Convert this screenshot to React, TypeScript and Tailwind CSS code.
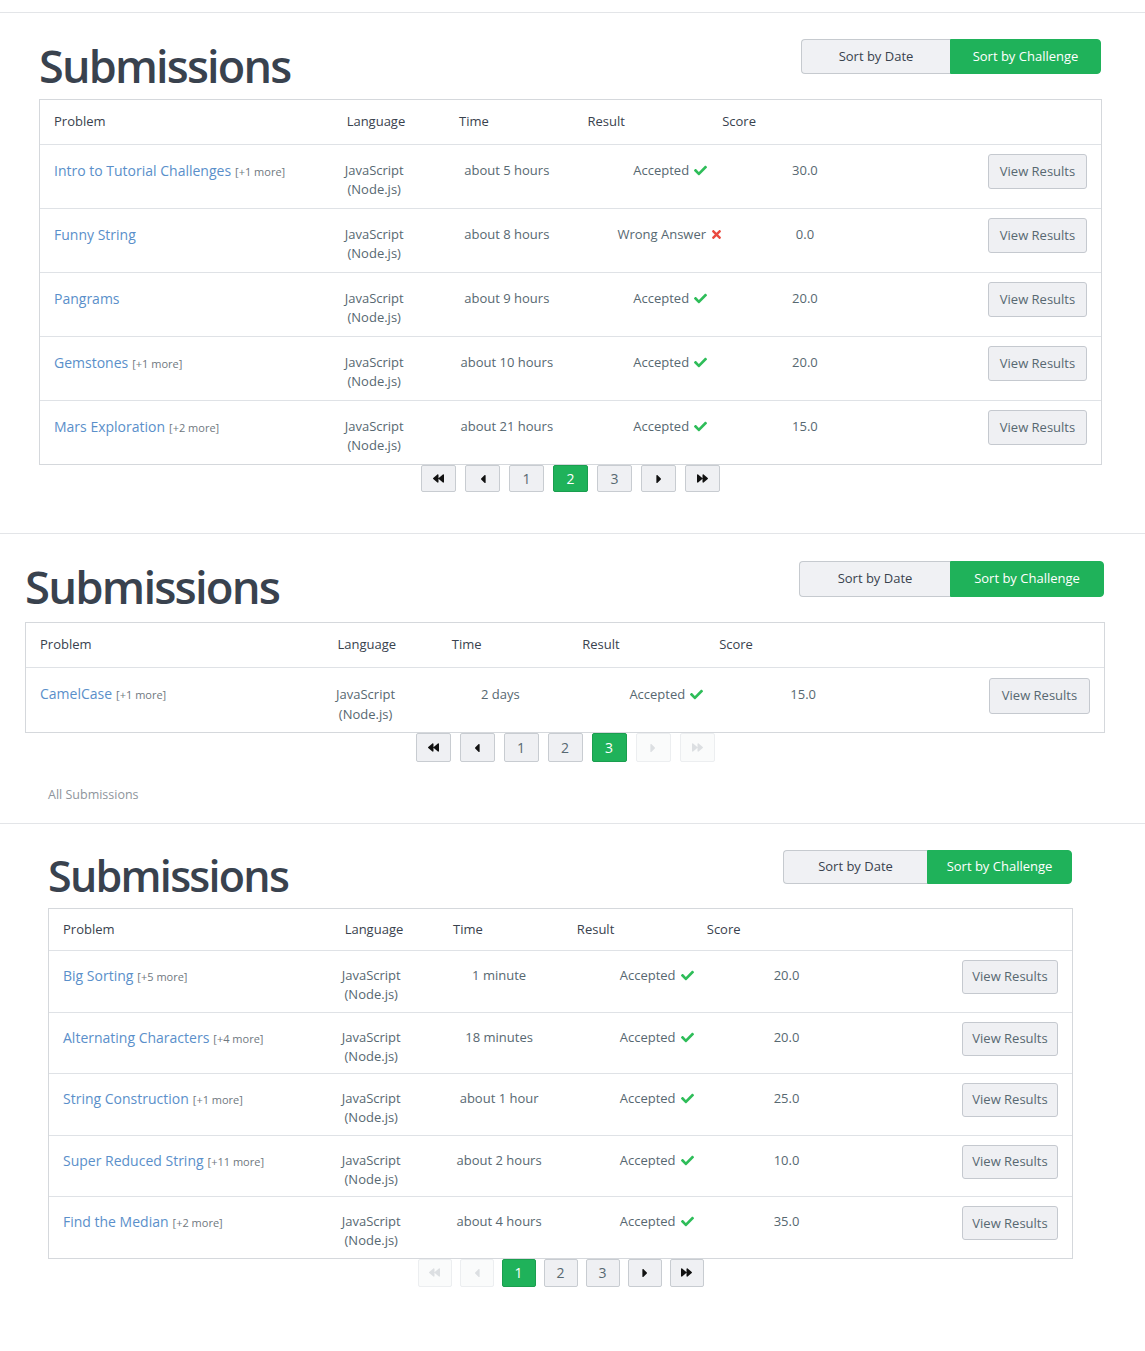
import { FaCheck, FaTimes, FaBackward, FaForward, FaCaretLeft, FaCaretRight } from 'react-icons/fa';

type Row = { problem: string; more?: string; time: string; ok: boolean; score: string };

type Layout = {
    section: string;
    pl: string;
    tableW: string;
    headArea: string;
    title: string;
    sortWrap: string;
    dateW: string;
    chalW: string;
    theadH: string;
    rowH: string;
    cellPt: string;
    btnPt: string;
    vrBtn: string;
    pager: string;
    pageBtn: string;
};

const P1: Layout = {
    section: 'mt-[12px] h-[521px]',
    pl: 'pl-[39px]',
    tableW: 'w-[1063px]',
    headArea: 'h-[86px]',
    title: 'text-[45px] mt-[30px]',
    sortWrap: 'mt-[26px] h-[35px]',
    dateW: 'w-[149px]',
    chalW: 'w-[151px]',
    theadH: 'h-[44px]',
    rowH: 'h-[64px]',
    cellPt: 'pt-[16px] leading-[19px]',
    btnPt: 'pt-[9px]',
    vrBtn: 'w-[99px] h-[35px]',
    pager: 'gap-[9px]',
    pageBtn: 'w-[35px] h-[27px]',
};

const P2: Layout = {
    section: 'h-[290px]',
    pl: 'pl-[25px]',
    tableW: 'w-[1080px]',
    headArea: 'h-[88px]',
    title: 'text-[45.5px] mt-[30px]',
    sortWrap: 'mt-[27px] h-[36px]',
    dateW: 'w-[151px]',
    chalW: 'w-[154px]',
    theadH: 'h-[44px]',
    rowH: 'h-[65px]',
    cellPt: 'pt-[16px] leading-[20px]',
    btnPt: 'pt-[10px]',
    vrBtn: 'w-[101px] h-[36px]',
    pager: 'gap-[9px]',
    pageBtn: 'w-[35px] h-[29px]',
};

const P3: Layout = {
    section: 'h-[528px]',
    pl: 'pl-[48px]',
    tableW: 'w-[1025px]',
    headArea: 'h-[84px]',
    title: 'text-[43px] mt-[30px]',
    sortWrap: 'mt-[26px] h-[34px]',
    dateW: 'w-[144px]',
    chalW: 'w-[145px]',
    theadH: 'h-[41px]',
    rowH: 'h-[61.6px]',
    cellPt: 'pt-[15px] leading-[19px]',
    btnPt: 'pt-[9px]',
    vrBtn: 'w-[96px] h-[34px]',
    pager: 'gap-[8px]',
    pageBtn: 'w-[34px] h-[28px]',
};

const ROWS1: Row[] = [
    { problem: 'Intro to Tutorial Challenges', more: '[+1 more]', time: 'about 5 hours', ok: true, score: '30.0' },
    { problem: 'Funny String', time: 'about 8 hours', ok: false, score: '0.0' },
    { problem: 'Pangrams', time: 'about 9 hours', ok: true, score: '20.0' },
    { problem: 'Gemstones', more: '[+1 more]', time: 'about 10 hours', ok: true, score: '20.0' },
    { problem: 'Mars Exploration', more: '[+2 more]', time: 'about 21 hours', ok: true, score: '15.0' },
];

const ROWS2: Row[] = [
    { problem: 'CamelCase', more: '[+1 more]', time: '2 days', ok: true, score: '15.0' },
];

const ROWS3: Row[] = [
    { problem: 'Big Sorting', more: '[+5 more]', time: '1 minute', ok: true, score: '20.0' },
    { problem: 'Alternating Characters', more: '[+4 more]', time: '18 minutes', ok: true, score: '20.0' },
    { problem: 'String Construction', more: '[+1 more]', time: 'about 1 hour', ok: true, score: '25.0' },
    { problem: 'Super Reduced String', more: '[+11 more]', time: 'about 2 hours', ok: true, score: '10.0' },
    { problem: 'Find the Median', more: '[+2 more]', time: 'about 4 hours', ok: true, score: '35.0' },
];

export default function App() {
    return (
        <div className="min-h-screen w-full bg-white font-['Open_Sans',sans-serif] text-[#576871] overflow-hidden">
            <Panel layout={P1} rows={ROWS1} page={2} />
            <Panel layout={P2} rows={ROWS2} page={3}>
                {/* breadcrumb of the next capture */}
                <div className="mt-[26px] pl-[23px] text-[12.5px] leading-[13px] text-[#8e959c]">All Submissions</div>
            </Panel>
            <Panel layout={P3} rows={ROWS3} page={1} />
        </div>
    );
}

function Panel({ layout: L, rows, page, children }: { layout: Layout; rows: Row[]; page: number; children?: React.ReactNode }) {
    return (
        <section className={`border-t border-[#e3e5e8] ${L.section}`}>
            <div className={L.pl}>
                <div className={L.tableW}>
                    <div className={`flex justify-between items-start ${L.headArea}`}>
                        <h1 className={`font-semibold text-[#39424e] leading-none tracking-[-0.04em] ${L.title}`}>Submissions</h1>
                        <div className={`flex mr-[1px] text-[13px] ${L.sortWrap}`}>
                            <button className={`${L.dateW} h-full bg-[#f0f1f4] border border-[#c6cacf] border-r-0 rounded-l-[4px] text-[#39424e]`}>
                                Sort by Date
                            </button>
                            <button className={`${L.chalW} h-full bg-[#1fb25a] border border-[#1fb25a] rounded-r-[4px] text-white`}>
                                Sort by Challenge
                            </button>
                        </div>
                    </div>

                    <div className="border border-[#d5d8dc]">
                        <div className={`grid grid-cols-[28.9%_10.6%_12.1%_12.7%_1fr] items-center text-[13px] font-medium text-[#39424e] ${L.theadH}`}>
                            <span className="pl-[14px]">Problem</span>
                            <span>Language</span>
                            <span>Time</span>
                            <span>Result</span>
                            <span>Score</span>
                        </div>
                        {rows.map(r => (
                            <div key={r.problem} className={`grid grid-cols-[26%_11%_14%_16.8%_8.6%_1fr] items-start border-t border-[#dfe2e6] text-[13px] ${L.rowH}`}>
                                <div className={`pl-[14px] ${L.cellPt}`}>
                                    <span className="text-[14px] text-[#5a8fca]">{r.problem}</span>
                                    {r.more && <span className="ml-[4px] text-[11px] text-[#6f7880]">{r.more}</span>}
                                </div>
                                <div className={`text-center ${L.cellPt}`}>
                                    JavaScript<br />(Node.js)
                                </div>
                                <div className={`text-center ${L.cellPt}`}>{r.time}</div>
                                <div className={`text-center ${L.cellPt}`}>
                                    {r.ok ? (
                                        <span className="inline-flex items-center gap-[5px]">
                                            Accepted <FaCheck className="text-[#2ebd59]" size={13} />
                                        </span>
                                    ) : (
                                        <span className="inline-flex items-center gap-[4px]">
                                            Wrong Answer <FaTimes className="text-[#ea4a3f]" size={13} />
                                        </span>
                                    )}
                                </div>
                                <div className={`text-center ${L.cellPt}`}>{r.score}</div>
                                <div className={`flex justify-end pr-[14px] ${L.btnPt}`}>
                                    <button className={`${L.vrBtn} bg-[#eff0f3] border border-[#c5c9cf] rounded-[3px] text-[13px] text-[#576871]`}>
                                        View Results
                                    </button>
                                </div>
                            </div>
                        ))}
                    </div>

                    <Pager layout={L} page={page} />
                    {children}
                </div>
            </div>
        </section>
    );
}

function Pager({ layout: L, page }: { layout: Layout; page: number }) {
    const first = page === 1;
    const last = page === 3;
    return (
        <div className={`flex justify-center ${L.pager}`}>
            <PageBtn cls={L.pageBtn} disabled={first}><FaBackward size={11} /></PageBtn>
            <PageBtn cls={L.pageBtn} disabled={first}><FaCaretLeft size={14} /></PageBtn>
            {[1, 2, 3].map(n => (
                <PageBtn key={n} cls={L.pageBtn} active={n === page}>{n}</PageBtn>
            ))}
            <PageBtn cls={L.pageBtn} disabled={last}><FaCaretRight size={14} /></PageBtn>
            <PageBtn cls={L.pageBtn} disabled={last}><FaForward size={11} /></PageBtn>
        </div>
    );
}

function PageBtn({ cls, active, disabled, children }: { cls: string; active?: boolean; disabled?: boolean; children: React.ReactNode }) {
    let look = 'bg-[#eff0f3] border-[#c8ccd1] text-[#111]';
    if (active) look = 'bg-[#1fb25a] border-[#1a9e4f] text-white';
    if (disabled) look = 'bg-[#fafbfb] border-[#eceef0] text-[#dcdfe2]';
    return (
        <button className={`${cls} flex items-center justify-center border rounded-[2px] text-[14px] ${look}`}>
            <span className={typeof children === 'number' && !active ? 'text-[#576871]' : ''}>{children}</span>
        </button>
    );
}
